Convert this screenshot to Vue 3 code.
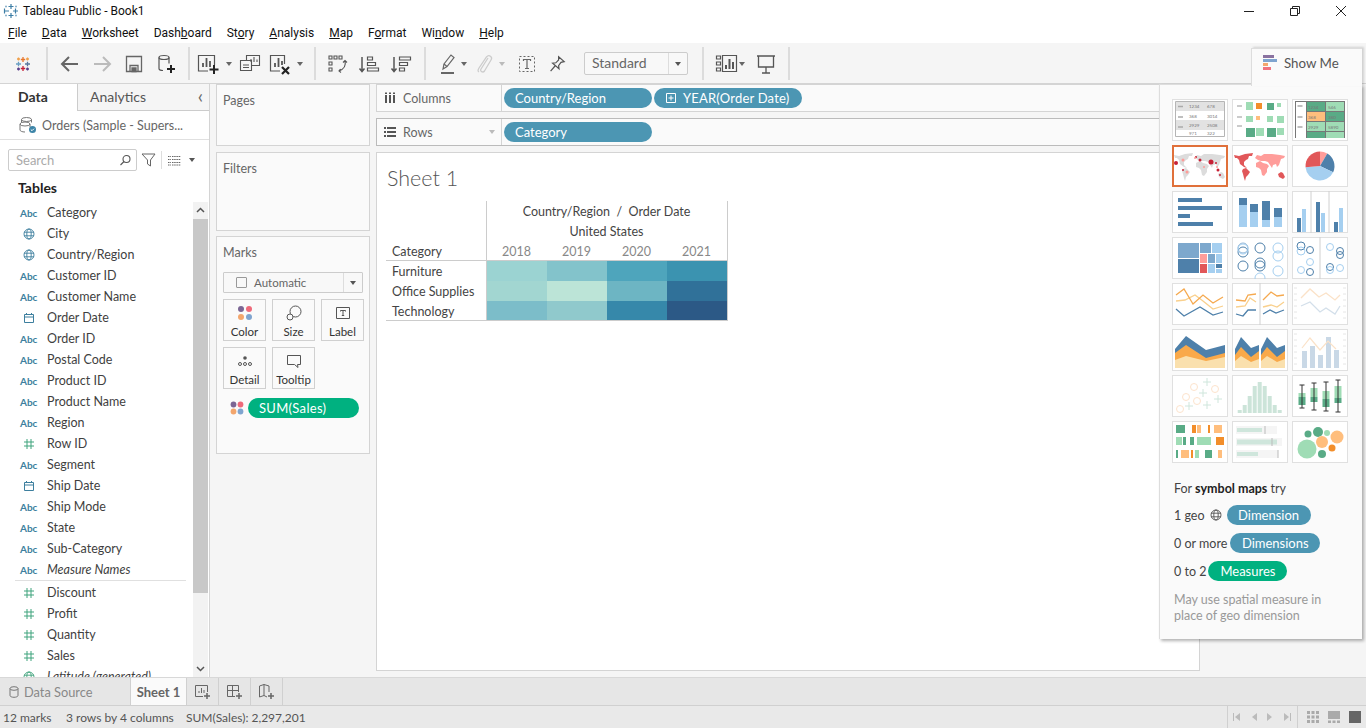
<template>
  <div class="app">
    <div class="titlebar">
      <svg class="app-logo" width="16" height="16" viewBox="0 0 16 16">
        <g stroke="#3d7ea6" stroke-width="1.2" fill="none">
          <path d="M8 1v5M5.5 3.5h5M8 10v5M5.5 12.5h5M1 8h5M1.5 5.5v5M10 8h5M12.5 5.5v5" />
          <path d="M3 2.5v2M2 3.5h2M13 2.5v2M12 3.5h2M3 11.5v2M2 12.5h2M13 11.5v2M12 12.5h2" stroke="#8fb4cc" />
        </g>
      </svg>
      <span class="app-title">Tableau Public - Book1</span>
      <div class="win-ctrls">
        <svg width="12" height="12" viewBox="0 0 12 12"><path d="M1 6.5h10" stroke="#222" /></svg>
        <svg width="12" height="12" viewBox="0 0 12 12" fill="none" stroke="#222"><path d="M1.5 3.5h7v7h-7zM3.5 3.5v-2h7v7h-2" /></svg>
        <svg width="12" height="12" viewBox="0 0 12 12"><path d="M1 1l10 10M11 1L1 11" stroke="#222" /></svg>
      </div>
    </div>

    <div class="menubar">
      <span><u>F</u>ile</span>
      <span><u>D</u>ata</span>
      <span><u>W</u>orksheet</span>
      <span>Dash<u>b</u>oard</span>
      <span>St<u>o</u>ry</span>
      <span><u>A</u>nalysis</span>
      <span><u>M</u>ap</span>
      <span>F<u>o</u>rmat</span>
      <span>Wi<u>n</u>dow</span>
      <span><u>H</u>elp</span>
    </div>

    <div class="toolbar">
      <div class="tb-group g1">
        <svg width="18" height="18" viewBox="0 0 18 18" fill="none" stroke-width="1.3">
          <path d="M9 2v5M6.8 4.5h4.4" stroke="#e8762c" />
          <path d="M2 9h5M4.5 6.8v4.4" stroke="#6a9ec2" />
          <path d="M11 9h5M13.5 6.8v4.4" stroke="#59789e" />
          <path d="M9 11v5M6.8 13.5h4.4" stroke="#c72035" />
          <path d="M4.5 2.5v3M3 4h3M13.5 2.5v3M12 4h3" stroke="#f0a04b" />
          <path d="M4.5 12.5v3M3 14h3M13.5 12.5v3M12 14h3" stroke="#5b3f8c" />
        </svg>
      </div>
      <div class="tb-group g2">
        <svg class="tool" viewBox="0 0 24 24" fill="none" stroke="#666" stroke-width="2"><path d="M20 12H5M11 5l-7 7 7 7" /></svg>
        <svg class="tool" viewBox="0 0 24 24" fill="none" stroke="#bbb" stroke-width="2"><path d="M4 12h15M13 5l7 7-7 7" /></svg>
        <svg class="tool" viewBox="0 0 24 24" fill="none" stroke="#666" stroke-width="1.3"><path d="M4.5 4.5h15v15h-15z" /><path d="M8 19.5v-6h8v6" /><path d="M10 16h4v3.500h-4z" fill="#666" /></svg>
        <svg class="tool" viewBox="0 0 24 24" fill="none" stroke="#555" stroke-width="1.2"><ellipse cx="10" cy="5.500" rx="5" ry="2" /><path d="M5 5.500v11c0 1.200 2 2 4 2M15 5.500v6" /><path d="M17 13v8M13 17h8" stroke="#222" stroke-width="2" /></svg>
      </div>
      <div class="tb-group g3">
        <svg class="tool" viewBox="0 0 24 24" fill="none" stroke="#555" stroke-width="1.2"><path d="M12 19H2.500V3.500h16V13" /><path d="M7 15v-4M10.500 15V6M14 15V9" stroke-width="1.800" /><path d="M18 13v9M13.500 17.500h9" stroke="#222" stroke-width="2" /></svg>
        <i class="caret"></i>
        <svg class="tool" viewBox="0 0 24 24" fill="none" stroke="#555" stroke-width="1.1"><path d="M8.500 8V3.500h13v10h-8" /><path d="M13 10V7M16 10V5M19 10V7.500" /><path d="M2.500 8.500h11v10h-11zM5 15.500h6M5 13h6" /></svg>
        <svg class="tool clear" viewBox="0 0 24 24" fill="none" stroke="#555" stroke-width="1.2"><path d="M12 19H2.500V3.500h14V12" /><path d="M7 15v-4M10.500 15V6M14 13V9" stroke-width="1.800" /><path d="M14 15l7 7M21 15l-7 7" stroke="#222" stroke-width="2.200" /></svg>
        <i class="caret after-clear"></i>
      </div>
      <div class="tb-group g4">
        <svg class="tool" viewBox="0 0 24 24" fill="none" stroke="#555" stroke-width="1.100"><path d="M4 4h3v3H4zM9 4h3v3H9zM14 4h3v3h-3zM4 10h3v3H4zM4 16h3v3H4z" /><path d="M20 9c1 4-1 8-6 10M15.500 17l-1.500 2 2 1.500M18 10.500L20 8.500l2 2" /></svg>
        <svg class="tool" viewBox="0 0 24 24" fill="none" stroke="#555" stroke-width="1.200"><path d="M5 5v14M2.500 16.500L5 19.500l2.500-3" stroke-width="1.500" /><path d="M10.500 5h5v3h-5zM10.500 10.500h8v3h-8zM10.500 16h11v3h-11z" /></svg>
        <svg class="tool" viewBox="0 0 24 24" fill="none" stroke="#555" stroke-width="1.200"><path d="M5 5v14M2.500 16.500L5 19.500l2.500-3" stroke-width="1.500" /><path d="M10.500 5h11v3h-11zM10.500 10.500h8v3h-8zM10.500 16h5v3h-5z" /></svg>
      </div>
      <div class="tb-group g5">
        <svg class="tool" viewBox="0 0 24 24" fill="none" stroke="#666" stroke-width="1.200"><path d="M7 17l1-5 7-9 3 2.500-7 9z" /><path d="M8 12l3 2.500" /><path d="M5 21h13" stroke-width="2" /></svg>
        <i class="caret tight"></i>
        <svg class="tool" viewBox="0 0 24 24" fill="none" stroke="#ccc" stroke-width="1.300"><path d="M16 6l-7 11c-1.500 2.500 2 4 3.500 2L19 8c2-3-2-6-4.500-3L7 16c-1.500 2.500-1 3.500 0 4" /></svg>
        <i class="caret pale"></i>
        <svg class="tool" viewBox="0 0 24 24" fill="none" stroke="#666"><path d="M4.500 4.500h15v15h-15z" stroke-dasharray="2 2" /><path d="M8.500 9V7.500h7V9M12 7.500v9M10 16.500h4" stroke-width="1.200" /></svg>
        <svg class="tool pin" viewBox="-3 -3 30 30" fill="none" stroke="#555" stroke-width="1.500"><path d="M14 3l7 6-4 1-3 4 .5 4-8-7 4-.5 3.500-3.500zM9.500 14.500L4 21" /></svg>
        <div class="fit-select">
          <span>Standard</span>
          <b><i class="caret dark"></i></b>
        </div>
      </div>
      <div class="tb-group g6">
        <svg class="tool" viewBox="0 0 24 24" fill="none" stroke="#555" stroke-width="1.200"><path d="M2.500 4h4v3h-4zM2.500 10h4v3h-4zM2.500 16h4v3h-4zM8.500 3.500h14v16h-14z" /><path d="M12 17v-4M15.500 17V7M19 17v-7" stroke-width="2" /></svg>
        <i class="caret tight"></i>
        <svg class="tool present" viewBox="0 0 24 24" fill="none" stroke="#555" stroke-width="1.300"><path d="M3 4h18M4.500 4v11h15V4M12 15v6M8 21h8" /></svg>
      </div>
    </div>

    <div class="workspace">
      <aside class="sidebar">
        <div class="side-tabs">
          <div class="side-tab active">Data</div>
          <div class="side-tab">Analytics<span class="collapse">‹</span></div>
        </div>
        <div class="source">
          <svg width="18" height="18" viewBox="0 0 18 18" fill="none" stroke="#777" stroke-width="1">
            <ellipse cx="7.500" cy="3.500" rx="5" ry="2" />
            <path d="M2.500 3.500v3M12.500 3.500v3" />
            <ellipse cx="6" cy="8" rx="5" ry="2" />
            <path d="M1 8v6c0 1 2 2 5 2M11 8v3" />
            <circle cx="13.500" cy="13.500" r="3.500" fill="#3d85a8" stroke="none" />
            <path d="M11.800 13.500l1.200 1.200 2-2" stroke="#fff" />
          </svg>
          <span>Orders (Sample - Supers...</span>
        </div>
        <div class="search-row">
          <div class="search">
            <span>Search</span>
            <svg width="13" height="13" viewBox="0 0 13 13" fill="none" stroke="#555" stroke-width="1.100"><circle cx="7.500" cy="5" r="3.500" /><path d="M5 7.500L1.500 11" /></svg>
          </div>
          <svg width="16" height="16" viewBox="0 0 16 16" fill="none" stroke="#666"><path d="M1 2h13L9.500 8v6l-3-2V8z" /></svg>
          <span class="search-div"></span>
          <svg width="13" height="11" viewBox="0 0 13 11" fill="none" stroke="#666"><path d="M0 1.500h3M4 1.500h9M0 4.500h3M4 4.500h9M0 7.500h3M4 7.500h9M0 10h3M4 10h9" stroke-dasharray="1.500 .7" /></svg>
          <i class="caret dark"></i>
        </div>
        <div class="tables-head">Tables</div>
        <div class="list-wrap">
          <div class="fields">
            <template v-for="f in fields" :key="f.name">
              <div class="field" :class="{ italic: f.italic, split: f.split }">
                <span v-if="f.type === 'abc'" class="f-icon abc">Abc</span>
                <svg v-else-if="f.type === 'geo'" class="f-icon" :class="{ measure: f.green }" viewBox="0 0 12 12" fill="none" stroke="currentColor" stroke-width=".9"><circle cx="6" cy="6" r="5" /><ellipse cx="6" cy="6" rx="2.200" ry="5" /><path d="M1 4.200h10M1 7.800h10" /></svg>
                <svg v-else-if="f.type === 'cal'" class="f-icon" viewBox="0 0 12 12" fill="none" stroke="currentColor"><path d="M1.500 2.500h9v8h-9zM1.500 5h9M3.500 1v2M8.500 1v2" /></svg>
                <svg v-else class="f-icon measure" viewBox="0 0 12 12" fill="none" stroke="currentColor"><path d="M4 1v10M8 1v10M1 4h10M1 8h10" /></svg>
                <span class="f-name">{{ f.name }}</span>
              </div>
            </template>
          </div>
          <div class="scrollbar">
            <svg width="15" height="17" viewBox="0 0 15 17" fill="none" stroke="#555" stroke-width="1.500"><path d="M4 10l3.500-3.500L11 10" /></svg>
            <div class="scroll-track"><div class="scroll-thumb"></div></div>
            <svg width="15" height="17" viewBox="0 0 15 17" fill="none" stroke="#555" stroke-width="1.500"><path d="M4 7l3.500 3.500L11 7" /></svg>
          </div>
        </div>
      </aside>

      <div class="cards">
        <section class="card pages">Pages</section>
        <section class="card filters">Filters</section>
        <section class="card marks">
          <div>Marks</div>
          <div class="mark-type">
            <i class="box"></i>
            <span>Automatic</span>
            <b><i class="caret dark"></i></b>
          </div>
          <div class="mark-btns">
            <div class="mark-btn">
              <svg width="16" height="16" viewBox="0 0 16 16"><circle cx="4" cy="4" r="3" fill="#7b6694" /><circle cx="12" cy="4" r="3" fill="#ee6a7a" /><circle cx="4" cy="12" r="3" fill="#f3a66d" /><circle cx="12" cy="12" r="3" fill="#7fa4cf" /></svg>
              <span>Color</span>
            </div>
            <div class="mark-btn">
              <svg width="16" height="16" viewBox="0 0 16 16" fill="none" stroke="#555"><circle cx="9.500" cy="6.500" r="5.500" /><circle cx="4" cy="12" r="3" fill="#fafafa" /></svg>
              <span>Size</span>
            </div>
            <div class="mark-btn">
              <svg width="16" height="16" viewBox="0 0 16 16" fill="none" stroke="#555"><path d="M1.500 2.500h13v11h-13z" /><path d="M5.500 6.500v-1h5v1M8 5.500v5M6.800 10.500h2.400" /></svg>
              <span>Label</span>
            </div>
            <div class="mark-btn">
              <svg width="16" height="16" viewBox="0 0 16 16" fill="none" stroke="#555"><circle cx="8" cy="5" r="1.800" fill="#555" stroke="none" /><circle cx="3" cy="11" r="1.500" /><circle cx="8" cy="11" r="1.500" /><circle cx="13" cy="11" r="1.500" /></svg>
              <span>Detail</span>
            </div>
            <div class="mark-btn">
              <svg width="16" height="16" viewBox="0 0 16 16" fill="none" stroke="#555"><path d="M1.500 2.500h13v9h-3l.5 3-3.500-3h-7z" /></svg>
              <span>Tooltip</span>
            </div>
          </div>
          <div class="mark-pill">
            <svg width="14" height="14" viewBox="0 0 16 16"><circle cx="4" cy="4" r="3.300" fill="#7b6694" /><circle cx="12" cy="4" r="3.300" fill="#ee6a7a" /><circle cx="4" cy="12" r="3.300" fill="#f3a66d" /><circle cx="12" cy="12" r="3.300" fill="#7fa4cf" /></svg>
            <span class="pill green">SUM(Sales)</span>
          </div>
        </section>
      </div>

      <div class="center">
        <div class="shelf">
          <div class="shelf-label">
            <svg width="12" height="12" viewBox="0 0 12 12" fill="#555"><path d="M1 3h2v8H1zM5 3h2v8H5zM9 3h2v8H9zM1 .500h2v1.500H1zM5 .500h2v1.500H5zM9 .500h2v1.500H9z" /></svg>
            <span>Columns</span>
          </div>
          <div class="pills">
            <span class="pill blue wide">Country/Region</span>
            <span class="pill blue wide year">
              <svg width="10" height="10" viewBox="0 0 10 10" fill="none" stroke="#fff"><path d="M.500.500h9v9h-9zM5 2.500v5M2.500 5h5" /></svg>
              YEAR(Order Date)
            </span>
          </div>
        </div>
        <div class="shelf rows">
          <div class="shelf-label">
            <svg width="12" height="12" viewBox="0 0 12 12" fill="#555"><path d="M0 1h2v2H0zM3 1h9v2H3zM0 5h2v2H0zM3 5h9v2H3zM0 9h2v2H0zM3 9h9v2H3z" /></svg>
            <span>Rows</span>
            <i class="caret pale drop"></i>
          </div>
          <div class="pills">
            <span class="pill blue wide">Category</span>
          </div>
        </div>
        <div class="view">
          <div class="sheet-title">Sheet 1</div>
          <div class="crosstab">
            <div class="ct-corner"></div>
            <div class="ct-head">Country/Region &nbsp;/&nbsp; Order Date</div>
            <div class="ct-corner"></div>
            <div class="ct-head">United States</div>
            <div class="ct-corner last">Category</div>
            <div v-for="y in years" :key="y" class="ct-year">{{ y }}</div>
            <template v-for="row in heat" :key="row.name">
              <div class="ct-row">{{ row.name }}</div>
              <div v-for="c in row.cells" :key="c" class="ct-cell" :style="{ background: c }"></div>
            </template>
          </div>
        </div>
      </div>
    </div>

    <div class="tabbar">
      <div class="tab ds">
        <svg width="10" height="12" viewBox="0 0 10 12" fill="none" stroke="#777"><ellipse cx="5" cy="2.500" rx="4" ry="1.800" /><path d="M1 2.500v7c0 1 1.800 1.800 4 1.800s4-.8 4-1.800v-7" /></svg>
        <span>Data Source</span>
      </div>
      <div class="tab sheet">Sheet 1</div>
      <div class="tab add">
        <svg width="16" height="16" viewBox="0 0 16 16" fill="none" stroke="#666"><path d="M8 12.500H.500v-11h12V8M4 9V7M6.500 9V4M9 9V6" /><path d="M12 9v6M9 12h6" stroke-width="1.500" /></svg>
      </div>
      <div class="tab add">
        <svg width="16" height="16" viewBox="0 0 16 16" fill="none" stroke="#666"><path d="M8 12.500H.500v-11h11V8M.500 6.500h11M5.500 1.500v11" /><path d="M12 9v6M9 12h6" stroke-width="1.500" /></svg>
      </div>
      <div class="tab add">
        <svg width="16" height="16" viewBox="0 0 16 16" fill="none" stroke="#666"><path d="M8 13L5 11.500l-4.500 1.500v-11L5 .500l5 1.500V8M5 .500v11" /><path d="M12 9v6M9 12h6" stroke-width="1.500" /></svg>
      </div>
    </div>

    <div class="statusbar">
      <span class="s1">12 marks</span>
      <span class="s2">3 rows by 4 columns</span>
      <span>SUM(Sales): 2,297,201</span>
      <div class="pager">
        <svg width="60" height="10" viewBox="0 0 60 10" fill="#bbb"><path d="M0 1h1v8H0zM2 5l5-4v8zM19 5l5-4v8zM34 1l5 4-5 4zM51 1l5 4-5 4zM57 1h1v8h-1z" /></svg>
      </div>
      <div class="fit-icons">
        <svg width="12" height="12" viewBox="0 0 12 12" fill="#aaa"><path d="M0 0h3v3H0zM4.500 0h3v3h-3zM9 0h3v3H9zM0 4.500h3v3H0zM4.500 4.500h3v3h-3zM9 4.500h3v3H9zM0 9h3v3H0zM4.500 9h3v3h-3zM9 9h3v3H9z" /></svg>
        <svg width="12" height="12" viewBox="0 0 12 12" fill="#aaa"><path d="M0 0h12v8H0zM0 9.500h3V12H0zM4.500 9.500h3V12h-3zM9 9.500h3V12H9z" /></svg>
        <svg width="12" height="12" viewBox="0 0 12 12" fill="#666"><path d="M0 0h12v12H0z" /></svg>
      </div>
    </div>

    <div class="showme">
      <div class="showme-tab">
        <svg width="14" height="15" viewBox="0 0 14 15"><path d="M0 0h11v3H0z" fill="#8a72a0" /><path d="M0 4h14v3H0z" fill="#7fa4cf" /><path d="M0 8h5v3H0z" fill="#f3a66d" /><path d="M0 12h8v3H0z" fill="#f0727f" /></svg>
        <span>Show Me</span>
      </div>
      <div class="thumbs">
        <div v-for="(t, i) in thumbs" :key="i" class="thumb" :class="{ selected: i === 3 }">
          <svg width="56" height="42" viewBox="0 0 56 42">
            <component :is="s.tag" v-for="(s, j) in t" :key="j" v-bind="s.attrs">{{ s.label }}</component>
          </svg>
        </div>
      </div>
      <div class="hint">
        <div class="hint-title">For <b>symbol maps</b> try</div>
        <div class="hint-row">
          <span>1 geo</span>
          <svg class="hint-geo" width="12" height="12" viewBox="0 0 12 12" fill="none" stroke="#555" stroke-width=".9"><circle cx="6" cy="6" r="5" /><ellipse cx="6" cy="6" rx="2.200" ry="5" /><path d="M1 4.200h10M1 7.800h10" /></svg>
          <span class="pill blue p-dim">Dimension</span>
        </div>
        <div class="hint-row">
          <span>0 or more</span>
          <span class="pill blue p-dims">Dimensions</span>
        </div>
        <div class="hint-row">
          <span>0 to 2</span>
          <span class="pill green p-meas">Measures</span>
        </div>
        <div class="hint-note">May use spatial measure in place of geo dimension</div>
      </div>
    </div>
  </div>
</template>

<script setup>
const field = (name, type, extra = {}) => ({ name, type, ...extra });

const fields = [
  field("Category", "abc"),
  field("City", "geo"),
  field("Country/Region", "geo"),
  field("Customer ID", "abc"),
  field("Customer Name", "abc"),
  field("Order Date", "cal"),
  field("Order ID", "abc"),
  field("Postal Code", "abc"),
  field("Product ID", "abc"),
  field("Product Name", "abc"),
  field("Region", "abc"),
  field("Row ID", "num"),
  field("Segment", "abc"),
  field("Ship Date", "cal"),
  field("Ship Mode", "abc"),
  field("State", "abc"),
  field("Sub-Category", "abc"),
  field("Measure Names", "abc", { italic: true }),
  field("Discount", "num", { split: true }),
  field("Profit", "num"),
  field("Quantity", "num"),
  field("Sales", "num"),
  field("Latitude (generated)", "geo", { italic: true, green: true }),
];

const years = [2018, 2019, 2020, 2021];

const heat = [
  { name: "Furniture", cells: ["#9bd3d2", "#83c3cb", "#4ea5bc", "#3b93b0"] },
  { name: "Office Supplies", cells: ["#a2d6d1", "#bce4d7", "#6db5c3", "#307199"] },
  { name: "Technology", cells: ["#7cbdc9", "#90c9cc", "#3688aa", "#2c5986"] },
];

// thumbnail shape helpers
const rect = (x, y, width, height, fill) => ({ tag: "rect", attrs: { x, y, width, height, fill } });
const path = (d, fill, stroke = "none", w = 1) => ({ tag: "path", attrs: { d, fill, stroke, "stroke-width": w } });
const ring = (cx, cy, r, stroke) => ({ tag: "circle", attrs: { cx, cy, r, stroke, fill: "none", "stroke-width": 1 } });
const dot = (cx, cy, r, fill) => ({ tag: "circle", attrs: { cx, cy, r, fill } });
const line = (d, stroke, w = 1) => path(d, "none", stroke, w);
const label = (x, y, text) => ({ tag: "text", attrs: { x, y, "font-size": 4.5, fill: "#777", "font-family": "Lato, sans-serif" }, label: text });

const DARK = "#59ab86";
const LIGHT = "#9fdcb5";
const ORANGE = "#f28e2b";
const PEACH = "#ffbe7d";
const BLUE = "#4e80aa";
const SKY = "#a5cff0";
const MID = "#7da8cd";
const RED = "#e15759";
const PINK = "#ff9d9a";

const NA = "M2 10L7 11L10 10L13 9L21 8L20 11L17 11L16 14L14 15L12 17L12 20L15 23L12 22L8 19L7 15L5 13L3 13Z";
const SA = "M11 24L14 23L18 27L16 30L14 32L13 36L12 33L11 29L10 26Z";
const EURASIA = "M23 13L25 10L29 11L32 9L40 9L48 10L53 11L52 13L49 14L48 17L47 20L45 22L44 19L41 20L40 23L38 20L36 17L33 16L29 16L26 15Z";
const AFRICA = "M24 18L28 16L31 18L35 19L37 21L35 24L35 27L32 31L30 30L29 25L27 23L24 22Z";
const AUS = "M46 29L49 27L51 28L53 32L51 34L47 32Z";

const ticks = (ys) =>
  ys.flatMap((y) => [line(`M2 ${y}h3`, "#e6e6e6"), line(`M51 ${y}h3`, "#e6e6e6")]);

const textTable = [
  rect(3, 2, 50, 36, "#fff"),
  rect(3, 3, 50, 9, "#e2e2e2"),
  rect(3, 21, 50, 10, "#e2e2e2"),
  line("M3.500 2.500h49v35h-49z", "#b5b5b5"),
  line("M6 7.500h5M6 18h5M6 28h5", "#aaa", 1.500),
  label(17, 9, "1234"), label(35, 9, "678"),
  label(17, 19, "368"), label(35, 19, "3014"),
  label(17, 28, "2929"), label(35, 28, "2508"),
  label(17, 36, "971"), label(35, 36, "322"),
];

const highlight = [
  line("M5 7h5M5 18h5M5 27h5", "#bbb", 1.500),
  rect(14, 3, 7, 8, LIGHT), rect(24, 4, 6, 6, ORANGE), rect(35, 4, 7, 7, DARK), rect(45, 4, 4, 4, LIGHT),
  rect(14, 17, 7, 6, LIGHT), rect(24, 17, 4, 4, PEACH), rect(35, 17, 6, 6, LIGHT), rect(45, 17, 7, 7, LIGHT),
  rect(14, 29, 9, 9, DARK), rect(24, 29, 8, 8, LIGHT), rect(35, 29, 9, 9, DARK), rect(45, 29, 7, 7, LIGHT),
];

const heatTable = [
  rect(3, 2, 50, 37, "#777"),
  rect(4, 3, 10, 36, "#fff"),
  rect(15, 3, 18, 9, DARK), rect(34, 3, 18, 9, LIGHT),
  rect(15, 13, 18, 9, PEACH), rect(34, 13, 18, 9, DARK),
  rect(15, 23, 18, 9, LIGHT), rect(34, 23, 18, 9, LIGHT),
  rect(15, 33, 18, 6, DARK), rect(34, 33, 18, 6, LIGHT),
  line("M5.500 7h5M5.500 18h5M5.500 28h5", "#aaa", 1.500),
  label(16, 9.500, "1234"), label(36, 9.500, "546"),
  label(16, 19.500, "368"), label(36, 19.500, "380"),
  label(16, 29.500, "2929"), label(36, 29.500, "5890"),
];

const symbolMap = [
  path(`${NA}${SA}${EURASIA}${AFRICA}${AUS}`, "#dcdcdc"),
  dot(4, 18, 2, "#c72035"), dot(11, 15, 1.500, PINK), dot(11, 25, 1, "#c72035"), dot(15, 27, 1.500, PINK),
  dot(24, 12, 1, "#c72035"), dot(28, 15, 1.500, "#c72035"), dot(23, 13, 1, PINK), dot(39, 17, 2.500, "#c72035"),
  dot(44, 18, 1, "#c72035"), dot(45, 22, 1, PINK), dot(46, 25, 1.500, "#c72035"), dot(48, 30, 1, "#c72035"),
  dot(32, 22, 1, PINK),
];

const filledMap = [
  path(NA + SA, RED),
  path(EURASIA + AFRICA, PINK),
  path(AUS, RED),
];

const pie = [
  path("M28 21L28 6.500A14.500 14.500 0 0 1 35.250 8.440Z", PINK),
  path("M28 21L35.250 8.440A14.500 14.500 0 0 1 41.140 27.130Z", BLUE),
  path("M28 21L41.140 27.130A14.500 14.500 0 0 1 13.550 22.260Z", SKY),
  path("M28 21L13.550 22.260A14.500 14.500 0 0 1 28 6.500Z", RED),
];

const hbars = [rect(6, 7, 24, 4, BLUE), rect(6, 15, 44, 4, BLUE), rect(6, 23, 12, 4, BLUE), rect(6, 31, 35, 4, BLUE)];

const stacked = [
  rect(7, 7, 8, 29, SKY), rect(7, 7, 8, 7, BLUE),
  rect(18, 13, 8, 23, SKY), rect(18, 13, 8, 8, BLUE),
  rect(30, 10, 8, 26, SKY), rect(30, 10, 8, 19, BLUE),
  rect(42, 17, 8, 19, SKY), rect(42, 17, 8, 9, BLUE),
];

const sideBars = [
  line("M19 0v42M37 0v42", "#d0d0d0"),
  rect(5, 27, 4, 14, BLUE), rect(10, 18, 4, 23, SKY),
  rect(24, 11, 4, 30, BLUE), rect(29, 22, 4, 19, SKY),
  rect(42, 31, 4, 10, BLUE), rect(47, 17, 4, 24, SKY),
];

const treemap = [
  rect(6, 6, 21, 15, MID), rect(6, 22, 21, 14, BLUE),
  rect(28, 6, 11, 10, MID), rect(40, 6, 10, 10, SKY),
  rect(28, 17, 7, 9, PINK), rect(28, 27, 7, 9, RED),
  rect(36, 17, 7, 9, MID), rect(36, 27, 7, 9, SKY),
  rect(44, 17, 6, 9, SKY), rect(44, 27, 6, 4, BLUE), rect(44, 32, 6, 4, SKY),
];

const circles = [
  ring(11, 11, 5, "#8db4d6"), ring(11, 15, 5, BLUE), ring(11, 12, 5, SKY), ring(28, 11, 5, BLUE),
  ring(46, 11, 5, SKY), ring(46, 19, 5, SKY), ring(11, 29, 5, BLUE), ring(28, 26, 5, BLUE),
  ring(28, 29, 5, BLUE), ring(46, 34, 5, SKY), ring(28, 41, 5, SKY),
];

const sideCircles = [
  line("M28 0v42", "#d0d0d0"),
  ring(9, 9, 4, BLUE), ring(9, 14, 4, SKY), ring(18, 13, 3.500, BLUE), ring(18, 25, 3.500, SKY),
  ring(9, 33, 3.500, SKY), ring(18, 35, 3.500, BLUE), ring(38, 10, 3.500, SKY), ring(48, 14, 3.500, BLUE),
  ring(48, 18, 3.500, BLUE), ring(38, 30, 3.500, BLUE), ring(38, 33, 3.500, SKY), ring(48, 31, 3.500, SKY),
];

const lines = [
  line("M4 18L13 17L23 12L31 18L41 26L51 23", "#f9d08d", 1.300),
  line("M4 12L12 6L21 21L31 12L41 20L51 14", "#f5a94f", 1.300),
  line("M4 26L12 33L28 24L41 32L51 29", BLUE, 1.300),
];

const sideLines = [
  line("M28 0v42", "#d0d0d0"),
  line("M4 17L13 18L16 12L24 11M31 17L39 9L45 13L52 12", "#f5a94f", 1.300),
  line("M4 24L13 23L18 15L24 19M31 24L39 22L45 24L52 19", "#f9d08d", 1.300),
  line("M4 31L11 33L16 27L24 27M31 31L38 27L44 30L52 27", BLUE, 1.300),
];

const dualLines = [
  ...ticks([5, 11, 17, 23, 29, 35]),
  line("M9 15L18 6L27 14L34 10L43 17L48 12", "#fbe2c8", 1.300),
  line("M9 23L18 19L28 29L34 25L43 31L48 23", "#d3dfea", 1.300),
];

const area = [
  path("M3 20L14 7L34 21L53 16V39H3Z", BLUE),
  path("M3 24L14 16L34 29L53 24V39H3Z", "#f9a94a"),
  path("M3 31L14 27L34 32L53 28V39H3Z", "#fae0ad"),
];

const sideArea = [0, 26].flatMap((dx) => {
  const shape = (a, b, c, d) => `M${3 + dx} ${a}L${9 + dx} ${b}L${19 + dx} ${c}L${27 + dx} ${d}V39H${3 + dx}Z`;
  return [
    path(shape(20, 8, 19, 16), BLUE),
    path(shape(26, 18, 28, 22), "#f9a94a"),
    path(shape(32, 27, 33, 30), "#fae0ad"),
  ];
});

const dualCombo = [
  ...ticks([5, 11, 17, 23, 29, 35]),
  rect(10, 22, 5, 17, "#c9d8e6"), rect(18, 17, 5, 22, "#c9d8e6"), rect(26, 26, 5, 13, "#c9d8e6"),
  rect(34, 8, 5, 31, "#c9d8e6"), rect(42, 21, 5, 18, "#c9d8e6"),
  line("M10 19L18 9L28 21L36 12L44 20", "#fbe2c8", 1.200),
];

const scatter = [
  ...[[8, 34], [14, 22], [22, 12], [25, 26], [43, 14]].map(([x, y]) => ring(x, y, 3.500, "#fde3cc")),
  ...[[17, 31], [31, 18], [35, 7], [35, 30], [46, 24]].map(([x, y]) => line(`M${x - 4} ${y}h8M${x} ${y - 4}v8`, "#cfe6dc")),
];

const histogram = [35, 30, 21, 11, 7, 11, 21, 30, 35].map((top, i) => rect(5.700 + 5 * i, top, 4, 38 - top, "#cce4d9"));

const boxes = [
  [10, 10, 33, 18, 22, 30], [22, 8, 35, 13, 22, 27], [34, 7, 36, 16, 24, 32], [46, 5, 37, 11, 23, 28],
].flatMap(([x, t, b, lightTop, mid, end]) => [
  rect(x - 3.500, lightTop, 7, mid - lightTop, LIGHT),
  rect(x - 3.500, mid, 7, end - mid, DARK),
  line(`M${x} ${t}V${b}M${x - 2.500} ${t}h5M${x - 2.500} ${b}h5`, "#333"),
]);

const gantt = [
  rect(4, 4, 9, 8, DARK), rect(20, 4, 4, 8, ORANGE), rect(25, 4, 4, 8, PEACH), rect(36, 4, 2, 8, ORANGE), rect(42, 4, 8, 8, PEACH),
  rect(4, 16, 6, 8, LIGHT), rect(11, 16, 3, 8, DARK), rect(18, 16, 4, 8, DARK), rect(25, 16, 14, 8, LIGHT), rect(44, 16, 8, 8, ORANGE),
  rect(4, 29, 2, 8, DARK), rect(9, 29, 8, 8, PEACH), rect(19, 29, 2, 8, ORANGE), rect(23, 29, 4, 8, LIGHT), rect(33, 29, 7, 8, DARK), rect(46, 29, 4, 8, PEACH),
];

const bullet = [
  rect(4, 5, 41, 8, "#f5f5f5"), rect(4, 17, 46, 8, "#f5f5f5"), rect(4, 29, 42, 8, "#f5f5f5"),
  rect(5, 7, 25, 4, "#cfe6dc"), rect(5, 18.500, 40, 5, "#cfe6dc"), rect(5, 31, 21, 4, "#cfe6dc"),
  line("M33 5v8M40 17v8M46 29v8", "#bbb"),
];

const bubbles = [
  dot(15, 28, 9.500, LIGHT), dot(16, 13, 3.500, DARK), dot(26, 11, 5, DARK), dot(35, 12, 3, LIGHT),
  dot(45, 16, 6.500, PEACH), dot(30, 21, 6, PEACH), dot(40, 27, 3.500, ORANGE), dot(30, 33, 4, DARK),
];

const thumbs = [
  textTable, highlight, heatTable,
  symbolMap, filledMap, pie,
  hbars, stacked, sideBars,
  treemap, circles, sideCircles,
  lines, sideLines, dualLines,
  area, sideArea, dualCombo,
  scatter, histogram, boxes,
  gantt, bullet, bubbles,
];
</script>

<style>
html,
body {
  margin: 0;
  overflow: hidden;
}
</style>

<style scoped>
.app {
  position: relative;
  width: 1366px;
  height: 728px;
  overflow: hidden;
  display: flex;
  flex-direction: column;
  background: #f5f5f5;
  font-family: Lato, sans-serif;
  font-size: 12.5px;
  color: #444;
}

.titlebar {
  height: 22px;
  display: flex;
  align-items: center;
  padding-left: 3px;
  background: #fff;
  font: 12px Roboto, sans-serif;
  color: #111;
}

.app-title {
  margin-left: 4px;
}

.win-ctrls {
  margin-left: auto;
  display: flex;
  gap: 34px;
  padding-right: 19px;
}

.menubar {
  height: 21px;
  display: flex;
  align-items: center;
  gap: 15px;
  padding-left: 8px;
  background: #fff;
  font: 12px Roboto, sans-serif;
  color: #111;
}

.toolbar {
  height: 41px;
  box-sizing: border-box;
  padding: 4px 0 3px;
  display: flex;
  border-bottom: 1px solid #d4d4d4;
}

.tb-group {
  box-sizing: border-box;
  display: flex;
  align-items: center;
  border-right: 2px solid #dcdcdc;
}

.g1 { width: 48px; justify-content: center; }
.g2 { width: 142px; padding-left: 10px; gap: 8px; }
.g3 { width: 126px; padding-left: 6px; }
.g4 { width: 110px; padding-left: 9px; gap: 8px; }
.g5 { width: 278px; padding-left: 10px; }
.g6 { width: 86px; padding-left: 10px; }

.tool {
  width: 24px;
  height: 24px;
  flex: none;
}

.caret {
  display: inline-block;
  flex: none;
  width: 0;
  height: 0;
  margin: 0 6px;
  border-left: 3.500px solid transparent;
  border-right: 3.500px solid transparent;
  border-top: 4px solid #666;
}

.caret.tight { margin: 0 5px 0 1px; }
.caret.pale { border-top-color: #bbb; margin: 0 10px 0 3px; }
.caret.dark { border-top-color: #555; margin: 0; }
.caret.after-clear { margin-left: 5px; }
.clear { margin-left: 6px; }
.pin { margin-left: 6px; }
.present { margin-left: 4px; }

.fit-select {
  width: 104px;
  height: 23px;
  margin-left: 15px;
  box-sizing: border-box;
  display: flex;
  align-items: center;
  background: #f8f8f8;
  border: 1px solid #ccc;
  border-radius: 2px;
  font-size: 14px;
  color: #666;
}

.fit-select span {
  flex: 1;
  padding: 0 0 2px 7px;
}

.fit-select b,
.mark-type b {
  width: 18px;
  height: 100%;
  display: flex;
  align-items: center;
  justify-content: center;
  border-left: 1px solid #ddd;
}

.workspace {
  height: 593px;
  display: flex;
}

.sidebar {
  width: 210px;
  flex: none;
  box-sizing: border-box;
  display: flex;
  flex-direction: column;
  background: #fff;
  border-right: 1px solid #d4d4d4;
}

.side-tabs {
  height: 26px;
  display: flex;
  background: #f5f5f5;
  font-size: 14px;
}

.side-tab {
  display: flex;
  align-items: center;
  box-sizing: border-box;
  height: 27px;
  padding-bottom: 2px;
  border-bottom: 1px solid #ccc;
}

.side-tab:first-child {
  width: 78px;
  padding-left: 18px;
  background: #fff;
  font-weight: 700;
  color: #333;
  border-bottom: none;
  border-right: 1px solid #ccc;
}

.side-tab:last-child {
  flex: 1;
  padding-left: 12px;
  color: #555;
}

.collapse {
  margin-left: auto;
  padding-right: 6px;
  font-size: 19px;
  line-height: 20px;
  color: #666;
}

.source {
  height: 29px;
  flex: none;
  display: flex;
  align-items: center;
  gap: 5px;
  padding-left: 19px;
  border-bottom: 1px solid #e0e0e0;
  color: #666;
  box-sizing: border-box;
  margin-top: 1px;
}

.search-row {
  margin-top: 9px;
  display: flex;
  align-items: center;
  gap: 4px;
  padding-left: 8px;
  height: 22px;
  flex: none;
}

.search {
  width: 129px;
  height: 22px;
  box-sizing: border-box;
  display: flex;
  align-items: center;
  justify-content: space-between;
  padding: 0 4px 0 7px;
  border: 1px solid #ccc;
  border-radius: 2px;
  color: #aaa;
  font-size: 13px;
}

.search-div {
  width: 1px;
  height: 18px;
  margin-right: 2px;
  background: #ddd;
}

.search-row .caret {
  margin-left: 4px;
}

.tables-head {
  margin: 8px 0 0 18px;
  height: 19px;
  flex: none;
  font-size: 14px;
  font-weight: 700;
  color: #222;
}

.list-wrap {
  flex: 1;
  min-height: 0;
  display: flex;
  padding-top: 4px;
}

.fields {
  width: 193px;
  overflow: hidden;
}

.field {
  height: 21px;
  display: flex;
  align-items: center;
  color: #3f3f3f;
}

.field.italic .f-name {
  font-style: italic;
}

.field.split {
  position: relative;
  margin-top: 2px;
}

.field.split::before {
  content: "";
  position: absolute;
  top: -2px;
  left: 15px;
  width: 171px;
  height: 1px;
  background: #e0e0e0;
}

.f-icon {
  width: 12px;
  height: 12px;
  margin: 0 12px 0 23px;
  flex: none;
  color: #3d7f9e;
}

.f-icon.abc {
  width: 20px;
  margin: 0 7px 0 20px;
  height: auto;
  font-size: 10px;
  font-weight: 700;
  line-height: 12px;
  white-space: nowrap;
}

.f-icon.measure {
  color: #3fa37c;
}

.scrollbar {
  width: 15px;
  flex: none;
  display: flex;
  flex-direction: column;
  background: #f2f2f2;
}

.scroll-track {
  flex: 1;
}

.scroll-thumb {
  height: 374px;
  background: #c8c8c8;
}

.cards {
  width: 154px;
  flex: none;
  margin: 0 6px;
  display: flex;
  flex-direction: column;
  gap: 5px;
}

.card {
  box-sizing: border-box;
  padding: 8px 6px;
  background: #fafafa;
  border: 1px solid #d4d4d4;
  color: #666;
}

.pages { height: 62px; margin-bottom: 1px; }
.filters { height: 79px; }
.marks { height: 218px; }

.mark-type {
  margin-top: 12px;
  height: 21px;
  box-sizing: border-box;
  display: flex;
  align-items: center;
  background: #f8f8f8;
  border: 1px solid #ccc;
  border-radius: 1px;
  font-size: 11.500px;
}

.mark-type span {
  flex: 1;
  margin-left: 7px;
}

.box {
  width: 9px;
  height: 9px;
  margin-left: 12px;
  border: 1px solid #999;
  border-radius: 1px;
}

.mark-btns {
  margin-top: 6px;
  display: grid;
  grid-template-columns: repeat(3, 43px);
  grid-auto-rows: 42px;
  gap: 6px;
}

.mark-btn {
  box-sizing: border-box;
  display: flex;
  flex-direction: column;
  align-items: center;
  gap: 4px;
  padding-top: 5px;
  border: 1px solid #d0d0d0;
  font-size: 11.500px;
  color: #333;
}

.mark-pill {
  margin-top: 9px;
  display: flex;
  align-items: center;
  gap: 4px;
  padding-left: 7px;
}

.pill {
  display: inline-flex;
  align-items: center;
  box-sizing: border-box;
  height: 20px;
  border-radius: 10px;
  color: #fff;
  font-size: 13px;
  white-space: nowrap;
}

.pill.blue { background: #4c96b3; }
.pill.green { background: #00b180; }

.mark-pill .pill {
  width: 111px;
  padding-left: 11px;
  letter-spacing: 0.3px;
}

.center {
  width: 824px;
  flex: none;
  display: flex;
  flex-direction: column;
}

.shelf {
  height: 28px;
  box-sizing: border-box;
  display: flex;
  background: #fafafa;
  border: 1px solid #d4d4d4;
  border-right: none;
}

.shelf.rows {
  margin-top: 6px;
  border-color: #bbb;
}

.shelf-label {
  width: 125px;
  box-sizing: border-box;
  display: flex;
  align-items: center;
  gap: 7px;
  padding-left: 7px;
  border-right: 1px solid #d4d4d4;
  color: #666;
}

.caret.pale.drop {
  margin: 0 6px 0 auto;
}

.pills {
  display: flex;
  align-items: center;
  gap: 2px;
  padding-left: 2px;
}

.pill.wide {
  width: 148px;
  padding-left: 11px;
}

.pill.year {
  gap: 7px;
  padding-left: 12px;
  letter-spacing: 0.2px;
}

.view {
  margin-top: 6px;
  height: 519px;
  box-sizing: border-box;
  padding: 13px 9px;
  background: #fff;
  border: 1px solid #d4d4d4;
}

.sheet-title {
  height: 22px;
  margin: 0 0 13px 1px;
  line-height: 24px;
  font-size: 21.500px;
  font-weight: 300;
  color: #555;
}

.crosstab {
  display: grid;
  grid-template-columns: 101px repeat(4, 60px);
  grid-template-rows: repeat(5, 20px) 19px;
  width: 341px;
  line-height: 22px;
  border-right: 1px solid #ccc;
  border-bottom: 1px solid #ccc;
}

.ct-corner,
.ct-head,
.ct-year,
.ct-row {
  color: #444;
  white-space: nowrap;
}

.ct-corner,
.ct-row {
  padding-left: 6px;
  border-right: 1px solid #ccc;
}

.ct-corner.last {
  border-bottom: 1px solid #ccc;
}

.ct-head {
  grid-column: span 4;
  text-align: center;
  padding-right: 1px;
}

.ct-year {
  text-align: center;
  padding-right: 1px;
  color: #888;
  border-bottom: 1px solid #ccc;
}

.ct-cell {
  min-width: 0;
}

.tabbar {
  display: flex;
  background: #e6e6e6;
  border-top: 1px solid #d8d8d8;
  border-bottom: 1px solid #d0d0d0;
  box-sizing: border-box;
  height: 29px;
}

.tab {
  display: flex;
  align-items: center;
  justify-content: center;
  border-right: 1px solid #d0d0d0;
  box-sizing: border-box;
}

.ds {
  width: 131px;
  justify-content: flex-start;
  gap: 5px;
  padding-left: 9px;
  color: #888;
  font-size: 12.800px;
}

.sheet {
  width: 56px;
  background: #fafafa;
  font-size: 13px;
  font-weight: 700;
  color: #666;
}

.add {
  width: 32px;
}

.statusbar {
  height: 22px;
  display: flex;
  align-items: center;
  background: #e9e9e9;
  padding-left: 3px;
  font-size: 12px;
  color: #555;
}

.s1 { width: 63px; }
.s2 { width: 120px; }

.pager {
  margin-left: auto;
  height: 100%;
  width: 71px;
  box-sizing: border-box;
  display: flex;
  align-items: center;
  justify-content: center;
  border-left: 1px solid #d0d0d0;
  border-right: 1px solid #d0d0d0;
}

.fit-icons {
  width: 68px;
  display: flex;
  gap: 9px;
  padding-left: 9px;
  box-sizing: border-box;
}

.showme {
  position: absolute;
  left: 1159px;
  top: 84px;
  width: 203px;
  height: 555px;
  box-sizing: border-box;
  padding: 14px 12px 0;
  background: #fafafa;
  border-top: 1px solid #ddd;
  border-left: 1px solid #ddd;
  box-shadow: 2px 2px 3px rgba(0, 0, 0, 0.3);
}

.showme-tab {
  position: absolute;
  right: 0;
  top: -37px;
  width: 111px;
  height: 38px;
  box-sizing: border-box;
  display: flex;
  align-items: center;
  gap: 7px;
  padding: 0 0 10px 11px;
  background: #fafafa;
  border-top: 1px solid #ddd;
  border-left: 1px solid #ddd;
  box-shadow: 2px -1px 2px rgba(0, 0, 0, 0.15);
  font-size: 13.300px;
  color: #555;
}

.thumbs {
  display: grid;
  grid-template-columns: repeat(3, 56px);
  grid-auto-rows: 42px;
  gap: 4px;
}

.thumb {
  position: relative;
  background: #fff;
  box-shadow: inset 0 0 0 1px #e0e0e0;
}

.thumb svg {
  display: block;
}

.thumb.selected::after {
  content: "";
  position: absolute;
  inset: 0;
  border: 2px solid #e0703a;
}

.hint {
  padding: 16px 2px 0;
  color: #444;
}

.hint-title {
  height: 20px;
  margin-bottom: 2px;
  line-height: 20px;
}

.hint-title b {
  color: #222;
}

.hint-row {
  height: 28px;
  display: flex;
  align-items: center;
  gap: 3px;
}

.hint-geo {
  margin-left: 2px;
}

.hint-row .pill {
  justify-content: center;
}

.p-dim { width: 84px; margin-left: 2px; }
.p-dims { width: 90px; }
.p-meas { width: 79px; margin-left: -1px; }

.hint-note {
  margin-top: 7px;
  line-height: 16px;
  color: #999;
}
</style>
